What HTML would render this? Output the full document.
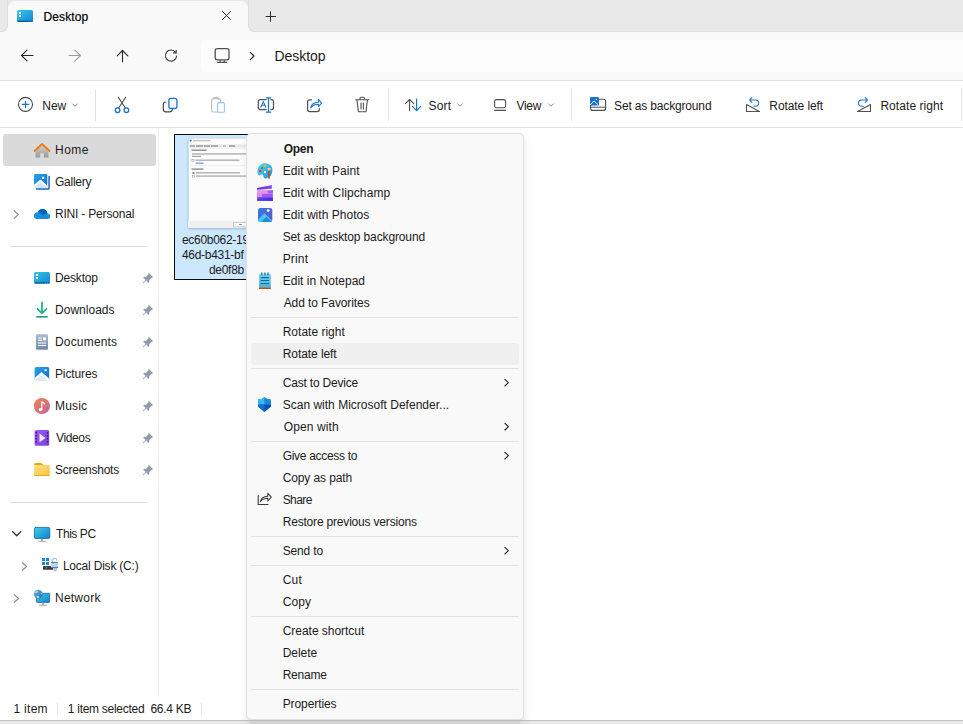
<!DOCTYPE html>
<html><head><meta charset="utf-8">
<style>
*{box-sizing:border-box}
html,body{margin:0;padding:0}
body{width:963px;height:724px;overflow:hidden;position:relative;background:#fff;font-family:"Liberation Sans",sans-serif;color:#1b1b1b}
.a{position:absolute}
.t{position:absolute;white-space:nowrap;font-size:13px;letter-spacing:-0.3px;line-height:16px}
svg{position:absolute;overflow:visible}
.nav .t{left:55px}
.m .t{left:283px}
.sep{position:absolute;height:1px;background:#e3e3e3}
</style></head><body>

<!-- tab strip -->
<div class="a" style="left:0;top:0;width:963px;height:81px;background:#f9f9f9"></div>
<div class="a" style="left:0;top:0;width:963px;height:32px;background:#e8e8e8"></div>
<div class="a" style="left:0;top:24px;width:963px;height:8px;background:#f9f9f9"></div>
<div class="a" style="left:0;top:0;width:8px;height:32px;background:#e8e8e8;border-bottom:1px solid #dcdcdc;border-right:1px solid #dcdcdc;border-bottom-right-radius:6px"></div>
<div class="a" style="left:248px;top:0;width:715px;height:32px;background:#e8e8e8;border-bottom:1px solid #dcdcdc;border-left:1px solid #dcdcdc;border-bottom-left-radius:6px"></div>
<div class="a" style="left:8px;top:1px;width:240px;height:40px;background:#f9f9f9;border-radius:7px 7px 0 0"></div>

<!-- address box -->
<div class="a" style="left:201px;top:40px;width:762px;height:32px;background:#fdfdfd;border-radius:5px 0 0 5px"></div>

<div class="a" style="left:0;top:80px;width:963px;height:1px;background:#e3e3e3"></div>
<!-- toolbar -->
<div class="a" style="left:0;top:81px;width:963px;height:46px;background:#fff"></div>
<div class="a" style="left:0;top:127px;width:963px;height:1px;background:#e3e3e3"></div>
<div class="a" style="left:95px;top:89px;width:1px;height:32px;background:#e3e3e3"></div>
<div class="a" style="left:388px;top:89px;width:1px;height:32px;background:#e3e3e3"></div>
<div class="a" style="left:571px;top:89px;width:1px;height:32px;background:#e3e3e3"></div>
<div class="a" style="left:961px;top:89px;width:1px;height:32px;background:#e3e3e3"></div>


<!-- nav pane -->
<div class="a" style="left:158px;top:128px;width:1px;height:569px;background:#efefef"></div>
<div class="a" style="left:3px;top:134px;width:153px;height:32px;background:#dadada;border-radius:3px"></div>
<div class="nav">
<div class="a" style="left:10px;top:246px;width:138px;height:1px;background:#dcdcdc"></div>
<div class="a" style="left:10px;top:502px;width:138px;height:1px;background:#dcdcdc"></div>
</div>

<!-- status bar -->
<div class="a" style="left:57px;top:703px;width:1px;height:11px;background:#e3e3e3"></div>
<div class="a" style="left:201px;top:703px;width:1px;height:11px;background:#e3e3e3"></div>
<div class="a" style="left:0;top:720px;width:963px;height:1px;background:#c2c2c2"></div>
<div class="a" style="left:0;top:721px;width:963px;height:3px;background:#e8e8e8"></div>
<div class="a" style="left:250px;top:721px;width:270px;height:3px;background:#dadada;box-shadow:0 0 8px 3px #dedede"></div>
<div class="a" style="left:0;top:720px;width:963px;height:1px;background:#c2c2c2"></div>

<!-- file item -->
<div class="a" style="left:174px;top:134px;width:90px;height:146px;background:#cce8ff;border:1px solid #0a0a0a"></div>
<div class="a" style="left:188px;top:138px;width:70px;height:90px;background:#fff;border:1px solid #c8c8c8;box-shadow:0 1px 2px rgba(0,0,0,.22)"></div>
<div class="t" style="left:182px;top:232px;font-size:12px">ec60b062-19cf-</div>
<div class="t" style="left:182px;top:247px;font-size:12px">46d-b431-bf</div>
<div class="t" style="left:209px;top:262px;font-size:12px">de0f8b</div>


<svg style="left:188px;top:138px" width="60" height="90" viewBox="0 0 60 90">
<rect x="0" y="0" width="60" height="90" fill="#fcfcfc"/><rect x="0" y="0" width="1" height="90" fill="#d9d9d9"/><rect x="0" y="0" width="60" height="0.8" fill="#dedede"/>
<circle cx="2.6" cy="2.6" r="1.1" fill="#2a7fe0"/>
<rect x="5" y="2.1" width="18" height="1.1" fill="#b8b8b8"/>
<rect x="0" y="6.4" width="60" height="3.2" fill="#e9e9e9"/>
<rect x="34" y="6.4" width="5" height="3.2" fill="#f6f6f6"/>
<rect x="2" y="7.4" width="5" height="1.2" fill="#8a8a8a"/><rect x="8" y="7.4" width="7" height="1.2" fill="#8a8a8a"/><rect x="16" y="7.4" width="6" height="1.2" fill="#8a8a8a"/><rect x="23" y="7.4" width="7" height="1.2" fill="#8a8a8a"/><rect x="35" y="7.4" width="3" height="1.2" fill="#a0a0a0"/><rect x="41" y="7.4" width="6" height="1.2" fill="#8a8a8a"/>
<rect x="3" y="10.2" width="57" height="17.2" fill="none" stroke="#e6e6e6" stroke-width="0.6"/>
<rect x="3.5" y="11.6" width="15" height="1.2" fill="#7a7a7a"/>
<rect x="4" y="15.4" width="56" height="1.1" fill="#9c9c9c"/>
<rect x="4" y="17.8" width="9" height="1.1" fill="#9c9c9c"/>
<rect x="4" y="21.3" width="2" height="2" fill="none" stroke="#999" stroke-width="0.5"/>
<rect x="7.5" y="21.6" width="44" height="1.1" fill="#9c9c9c"/>
<rect x="7.5" y="24.6" width="8" height="1.1" fill="#5b94e6"/>
<rect x="3.5" y="30.5" width="12" height="1.2" fill="#7a7a7a"/>
<rect x="4.5" y="34" width="2" height="2" fill="#888"/>
<rect x="8" y="34.3" width="44" height="1.1" fill="#9c9c9c"/>
<rect x="4.5" y="37.2" width="2" height="2" fill="none" stroke="#999" stroke-width="0.5"/>
<rect x="8" y="37.5" width="52" height="1.1" fill="#9c9c9c"/>
<rect x="0" y="83" width="60" height="7" fill="#f0f0f0"/>
<rect x="45.4" y="84.4" width="15" height="4.4" fill="#fbfbfb" stroke="#9fb6d0" stroke-width="0.6"/>
<rect x="51" y="86.2" width="3" height="0.8" fill="#777"/>
</svg>

<!-- context menu -->
<div class="a" style="left:246px;top:133px;width:278px;height:587px;background:#f9f9f9;border:1px solid #dfdfdf;border-radius:5px;box-shadow:1px 2px 9px rgba(0,0,0,.08)"></div>
<div class="a" style="left:251px;top:343px;width:268px;height:22px;background:#f0f0f0;border-radius:4px"></div>
<div class="m">
<div class="sep" style="left:251px;top:317px;width:268px"></div>
<div class="sep" style="left:251px;top:368px;width:268px"></div>
<div class="sep" style="left:251px;top:441px;width:268px"></div>
<div class="sep" style="left:251px;top:536px;width:268px"></div>
<div class="sep" style="left:251px;top:565px;width:268px"></div>
<div class="sep" style="left:251px;top:616px;width:268px"></div>
<div class="sep" style="left:251px;top:689px;width:268px"></div>
</div>

<div class="t tab" style="left:43.5px;top:9px;font-size:12px;letter-spacing:0.117px;-webkit-text-stroke:0.2px #000;color:#000">Desktop</div>
<div class="t addr" style="left:274.5px;top:48px;font-size:14px;letter-spacing:-0.033px">Desktop</div>
<div class="t tb" style="left:42.3px;top:98px;font-size:12px;letter-spacing:-0.025px">New</div>
<div class="t tb" style="left:428.5px;top:98px;font-size:12px;letter-spacing:0.167px">Sort</div>
<div class="t tb" style="left:516.5px;top:98px;font-size:12px;letter-spacing:-0.333px">View</div>
<div class="t tb" style="left:614.1px;top:98px;font-size:12px;letter-spacing:-0.163px">Set as background</div>
<div class="t tb" style="left:769.3px;top:98px;font-size:12px;letter-spacing:-0.08px">Rotate left</div>
<div class="t tb" style="left:880.4px;top:98px;font-size:12px;letter-spacing:0.064px">Rotate right</div>
<div class="t nav" style="left:55.0px;top:142px;font-size:12px;letter-spacing:0.5px">Home</div>
<div class="t nav" style="left:55.0px;top:174px;font-size:12px;letter-spacing:-0.25px">Gallery</div>
<div class="t nav" style="left:55.0px;top:206px;font-size:12px;letter-spacing:-0.193px">RINI - Personal</div>
<div class="t nav" style="left:55.0px;top:270px;font-size:12px;letter-spacing:-0.167px">Desktop</div>
<div class="t nav" style="left:55.0px;top:302px;font-size:12px;letter-spacing:0.025px">Downloads</div>
<div class="t nav" style="left:55.0px;top:334px;font-size:12px;letter-spacing:0.175px">Documents</div>
<div class="t nav" style="left:55.0px;top:366px;font-size:12px;letter-spacing:-0.129px">Pictures</div>
<div class="t nav" style="left:55.0px;top:398px;font-size:12px;letter-spacing:0.175px">Music</div>
<div class="t nav" style="left:56.0px;top:430px;font-size:12px;letter-spacing:-0.36px">Videos</div>
<div class="t nav" style="left:55.0px;top:462px;font-size:12px;letter-spacing:-0.25px">Screenshots</div>
<div class="t nav" style="left:56.0px;top:526px;font-size:12px;letter-spacing:-0.433px">This PC</div>
<div class="t nav" style="left:62.9px;top:558px;font-size:12px;letter-spacing:-0.207px">Local Disk (C:)</div>
<div class="t nav" style="left:55.0px;top:590px;font-size:12px;letter-spacing:0.233px">Network</div>
<div class="t menu" style="left:283.7px;top:141px;font-size:12px;letter-spacing:-0.3px;font-weight:bold">Open</div>
<div class="t menu" style="left:282.7px;top:163px;font-size:12px;letter-spacing:0.057px">Edit with Paint</div>
<div class="t menu" style="left:282.7px;top:185px;font-size:12px;letter-spacing:0.122px">Edit with Clipchamp</div>
<div class="t menu" style="left:282.7px;top:207px;font-size:12px;letter-spacing:0.04px">Edit with Photos</div>
<div class="t menu" style="left:282.7px;top:229px;font-size:12px;letter-spacing:-0.125px">Set as desktop background</div>
<div class="t menu" style="left:282.7px;top:251px;font-size:12px;letter-spacing:0.15px">Print</div>
<div class="t menu" style="left:282.7px;top:273px;font-size:12px;letter-spacing:0.021px">Edit in Notepad</div>
<div class="t menu" style="left:283.7px;top:295px;font-size:12px;letter-spacing:-0.093px">Add to Favorites</div>
<div class="t menu" style="left:282.7px;top:324px;font-size:12px;letter-spacing:0.009px">Rotate right</div>
<div class="t menu" style="left:282.7px;top:346px;font-size:12px;letter-spacing:-0.07px">Rotate left</div>
<div class="t menu" style="left:282.7px;top:375px;font-size:12px;letter-spacing:-0.192px">Cast to Device</div>
<div class="t menu" style="left:282.7px;top:397px;font-size:12px;letter-spacing:0.01px">Scan with Microsoft Defender...</div>
<div class="t menu" style="left:283.7px;top:419px;font-size:12px;letter-spacing:0.113px">Open with</div>
<div class="t menu" style="left:282.7px;top:448px;font-size:12px;letter-spacing:-0.308px">Give access to</div>
<div class="t menu" style="left:282.7px;top:470px;font-size:12px;letter-spacing:-0.109px">Copy as path</div>
<div class="t menu" style="left:282.7px;top:492px;font-size:12px;letter-spacing:-0.575px">Share</div>
<div class="t menu" style="left:282.7px;top:514px;font-size:12px;letter-spacing:-0.188px">Restore previous versions</div>
<div class="t menu" style="left:282.7px;top:543px;font-size:12px;letter-spacing:-0.15px">Send to</div>
<div class="t menu" style="left:282.7px;top:572px;font-size:12px;letter-spacing:0.2px">Cut</div>
<div class="t menu" style="left:282.7px;top:594px;font-size:12px;letter-spacing:0.133px">Copy</div>
<div class="t menu" style="left:282.7px;top:623px;font-size:12px;letter-spacing:-0.029px">Create shortcut</div>
<div class="t menu" style="left:282.7px;top:645px;font-size:12px;letter-spacing:-0.04px">Delete</div>
<div class="t menu" style="left:282.7px;top:667px;font-size:12px;letter-spacing:-0.24px">Rename</div>
<div class="t menu" style="left:282.7px;top:696px;font-size:12px;letter-spacing:-0.089px">Properties</div>
<div class="t status" style="left:13.5px;top:701px;font-size:12px;letter-spacing:0.28px">1 item</div>
<div class="t status" style="left:67.8px;top:701px;font-size:12px;letter-spacing:-0.278px">1 item selected&nbsp; 66.4 KB</div>
<!-- ICONS: titlebar/nav -->
<svg style="left:17px;top:10px" width="16" height="12" viewBox="0 0 16 12">
<defs><linearGradient id="gdesk" x1="0" y1="0" x2="1" y2="1"><stop offset="0" stop-color="#30cbe4"/><stop offset="1" stop-color="#1583d6"/></linearGradient></defs>
<rect x="0" y="0" width="16" height="12" rx="1.5" fill="url(#gdesk)"/>
<rect x="0.5" y="10.6" width="11" height="1.4" fill="#0b5a9c"/><rect x="12" y="10.6" width="1.2" height="1.4" fill="#0b5a9c"/><rect x="14.2" y="10.6" width="1.3" height="1.4" fill="#0b5a9c"/>
<rect x="2" y="2" width="2" height="2" fill="#fff"/><rect x="2" y="5" width="2" height="2" fill="#fff"/>
</svg>
<svg style="left:0;top:0" width="963" height="130" viewBox="0 0 963 130" fill="none" stroke-linecap="round" stroke-linejoin="round">
<path d="M222.5 11.5 L230.5 19.5 M230.5 11.5 L222.5 19.5" stroke="#2a2a2a" stroke-width="1"/>
<path d="M266 16.5 H275.5 M270.5 11.8 V21.4" stroke="#2a2a2a" stroke-width="1"/>
<path d="M33 55.5 H21.5 M27 50.2 L21.5 55.5 L27 60.8" stroke="#262626" stroke-width="1.1"/>
<path d="M69 55.5 H80.5 M75 50.2 L80.5 55.5 L75 60.8" stroke="#9d9d9d" stroke-width="1.1"/>
<path d="M122.5 61.8 V50.5 M117.2 55.8 L122.5 50.5 L127.8 55.8" stroke="#262626" stroke-width="1.1"/>
<path d="M175.6 52.4 A5.6 5.6 0 1 0 176.6 56" stroke="#3a3a3a" stroke-width="1.1"/>
<path d="M176.2 50.2 V52.9 H173.5" stroke="#3a3a3a" stroke-width="1.1"/>
<rect x="215.2" y="48.6" width="13.8" height="11.2" rx="2" stroke="#505050" stroke-width="1.3"/>
<path d="M220 60.5 V61.8 M224.2 60.5 V61.8" stroke="#505050" stroke-width="1.2"/>
<path d="M217.5 62.3 H226.7" stroke="#505050" stroke-width="1.2"/>
<path d="M250.3 52.3 L254 56 L250.3 59.7" stroke="#262626" stroke-width="1.1"/>
<!-- toolbar -->
<circle cx="25.5" cy="104.4" r="7" stroke="#474747" stroke-width="1.1"/>
<path d="M22.4 104.4 H28.6 M25.5 101.3 V107.5" stroke="#1773d0" stroke-width="1.3"/>
<path d="M72.5 103.8 L75 106.3 L77.5 103.8 M457.5 103.8 L460 106.3 L462.5 103.8 M548.5 103.8 L551 106.3 L553.5 103.8" stroke="#8c8c8c" stroke-width="1"/>
<path d="M118.3 97.2 L125.2 107.8 M125.7 97.2 L118.8 107.8" stroke="#4a4a4a" stroke-width="1.1"/>
<circle cx="117.6" cy="110.2" r="2.3" stroke="#1773d0" stroke-width="1.3"/>
<circle cx="126.4" cy="110.2" r="2.3" stroke="#1773d0" stroke-width="1.3"/>
<path d="M165.8 102 Q163.3 102 163.3 104.5 V109.3 Q163.3 111.8 165.8 111.8 H169.4 Q171.9 111.8 172.3 109.6" stroke="#474747" stroke-width="1.2"/>
<rect x="168.9" y="98.3" width="8" height="10.2" rx="2" stroke="#1773d0" stroke-width="1.3" fill="#fafafa"/>
<rect x="211.6" y="98.8" width="9" height="13.2" rx="1.5" stroke="#bcbcbc" stroke-width="1.1"/>
<path d="M214 99 V97.6 H218.3 V99" stroke="#bcbcbc" stroke-width="1.1"/>
<rect x="217.6" y="102.6" width="6.8" height="9.6" rx="1.3" stroke="#8fc4f1" stroke-width="1.1" fill="#fff"/>
<path d="M266.2 99.6 H260.3 Q258.3 99.6 258.3 101.6 V107.6 Q258.3 109.6 260.3 109.6 H266.2 M270.8 99.6 H271.5 Q273.5 99.6 273.5 101.6 V107.6 Q273.5 109.6 271.5 109.6 H270.8" stroke="#505050" stroke-width="1.2"/>
<path d="M268.5 97.8 V112.2 M266.3 97.8 H270.7 M266.3 112.2 H270.7" stroke="#1773d0" stroke-width="1.2"/>
<path d="M260.8 107.2 L263.3 101.6 L265.8 107.2 M261.8 105.2 H264.8" stroke="#1773d0" stroke-width="1.1"/>
<path d="M311.5 99.8 H309.6 Q307.6 99.8 307.6 101.8 V109.6 Q307.6 111.6 309.6 111.6 H317.3 Q319.3 111.6 319.3 109.6 V108.6" stroke="#505050" stroke-width="1.2"/>
<path d="M310.6 108 Q311.4 102.6 318.4 102.2 V99.4 L321.6 103.1 L318.4 106.6 V104.2 Q313 104.4 310.6 108 Z" stroke="#1773d0" stroke-width="1.1"/>
<path d="M355.6 99.8 H368.8 M360 99.5 V98.3 Q360 97.3 361 97.3 H363.5 Q364.5 97.3 364.5 98.3 V99.5 M357 100 L358.4 111.8 H366 L367.4 100 M361 103 V109 M363.4 103 V109" stroke="#505050" stroke-width="1.1"/>
<path d="M409.6 110.8 V99.5 M405.4 103.7 L409.6 99.5 L413.8 103.7" stroke="#505050" stroke-width="1.1"/>
<path d="M416.6 99.2 V110.6 M412.4 106.4 L416.6 110.6 L420.8 106.4" stroke="#1773d0" stroke-width="1.2"/>
<rect x="494.6" y="99.6" width="11" height="8.2" rx="1.8" stroke="#505050" stroke-width="1.1"/>
<path d="M494.6 110.4 H505.6" stroke="#505050" stroke-width="1.1"/>
<rect x="590.6" y="99.2" width="15" height="11.2" rx="2" stroke="#505050" stroke-width="1.1"/>
<path d="M590.6 107.2 H605.6" stroke="#505050" stroke-width="1"/>
<rect x="590" y="97" width="9" height="8.6" rx="1.2" fill="#1773d0"/>
<path d="M590.3 104.6 L594 101 L598.2 104.8" stroke="#fff" stroke-width="0.9"/>
<circle cx="596.4" cy="99.4" r="0.7" fill="#fff"/>
<path d="M746.5 104.5 V111.5 H759.5 Z" stroke="#505050" stroke-width="1.1" fill="#fff"/>
<path d="M749.5 100 H755.6 A3.1 3.1 0 0 1 755.6 106.2 H754 M751.9 97.6 L749.5 100 L751.9 102.4" stroke="#1773d0" stroke-width="1.05"/>
<path d="M870.5 104.5 V111.5 H857.5 Z" stroke="#505050" stroke-width="1.1" fill="#fff"/>
<path d="M867.7 100 H861.6 A3.1 3.1 0 0 0 861.6 106.2 H863.2 M865.3 97.6 L867.7 100 L865.3 102.4" stroke="#1773d0" stroke-width="1.05"/>
</svg>

<!-- ICONS: nav pane -->
<svg style="left:0;top:128px" width="160" height="570" viewBox="0 128 160 570" fill="none" stroke-linecap="round" stroke-linejoin="round">
<defs>
<linearGradient id="ghome" x1="0" y1="0" x2="0" y2="1"><stop offset="0" stop-color="#d0d0d0"/><stop offset="1" stop-color="#9a9a9a"/></linearGradient>
<linearGradient id="gblue" x1="0" y1="0" x2="1" y2="1"><stop offset="0" stop-color="#2aa3ec"/><stop offset="1" stop-color="#0f6cc8"/></linearGradient>
<linearGradient id="gdesk2" x1="0" y1="0" x2="1" y2="1"><stop offset="0" stop-color="#30cbe4"/><stop offset="1" stop-color="#1583d6"/></linearGradient>
<linearGradient id="gdoc" x1="0" y1="0" x2="0" y2="1"><stop offset="0" stop-color="#a9bbd2"/><stop offset="1" stop-color="#7189a8"/></linearGradient>
<linearGradient id="gmusic" x1="0" y1="0" x2="1" y2="1"><stop offset="0" stop-color="#f0824a"/><stop offset="1" stop-color="#c0659e"/></linearGradient>
<linearGradient id="gvid" x1="0" y1="0" x2="1" y2="1"><stop offset="0" stop-color="#9a5cf0"/><stop offset="1" stop-color="#7a3fd8"/></linearGradient>
<linearGradient id="gfold" x1="0" y1="0" x2="1" y2="1"><stop offset="0" stop-color="#ffe08a"/><stop offset="1" stop-color="#fcc43c"/></linearGradient>
<linearGradient id="gglobe" x1="0" y1="0" x2="1" y2="1"><stop offset="0" stop-color="#6fc0ee"/><stop offset="1" stop-color="#2569a8"/></linearGradient>
<linearGradient id="gpc" x1="0" y1="0" x2="1" y2="1"><stop offset="0" stop-color="#3fd0ea"/><stop offset="1" stop-color="#137fcc"/></linearGradient>
</defs>
<!-- home -->
<path d="M35.5 150.5 V157.5 H40.2 V153.2 H43.8 V157.5 H48.5 V150.5 L42 145 Z" fill="url(#ghome)"/>
<path d="M34.5 151 L42 144 L49.5 151" stroke="#f07814" stroke-width="1.8"/>
<!-- gallery -->
<path d="M49.1 176.6 V188.3 Q49.1 189.1 48.3 189.1 H36.4" stroke="#1a66c2" stroke-width="1.5" stroke-linecap="round"/>
<rect x="34" y="174" width="13.3" height="13.2" rx="1.2" fill="url(#gblue)"/>
<path d="M34 187.2 V184.8 L40.5 179.6 L47.3 185.6 V187.2 Z" fill="#ffffff"/>
<path d="M34 187.2 V186.4 L40.5 182.2 L46.4 187.2 Z" fill="#d2e8fb"/>
<rect x="42" y="176.8" width="2.2" height="2.2" fill="#fff"/>
<!-- onedrive -->
<path d="M14.2 210.8 L18.4 214.6 L14.2 218.4" stroke="#8a8a8a" stroke-width="1.2"/>
<path d="M36.5 218.9 H48 Q50.2 218.9 50.2 216.5 Q50.2 213.9 47.5 213.6 Q46.5 209 42.5 209 Q39 209 38 212.2 Q34 212.6 34 215.6 Q34 218.9 36.5 218.9 Z" fill="#1490df"/>
<path d="M38 212.2 Q39 209 42.5 209 Q46.5 209 47.5 213.6 Q44.5 213.4 42.8 215.2 Q40.8 212 38 212.2 Z" fill="#0364b8"/>
<!-- separators are divs -->
<!-- desktop -->
<rect x="34" y="272" width="16" height="11.6" rx="1.5" fill="url(#gdesk2)"/>
<rect x="34.5" y="282.2" width="11" height="1.4" fill="#0b5a9c"/><rect x="46" y="282.2" width="1.2" height="1.4" fill="#0b5a9c"/><rect x="48.2" y="282.2" width="1.3" height="1.4" fill="#0b5a9c"/>
<rect x="36" y="274" width="2" height="2" fill="#fff"/><rect x="36" y="277" width="2" height="2" fill="#fff"/>
<!-- downloads -->
<path d="M42 302.5 V313 M37.5 308.8 L42 313.3 L46.5 308.8" stroke="#20b383" stroke-width="1.8"/>
<path d="M36.3 316.8 H47.7" stroke="#1a9e7a" stroke-width="1.6" stroke-linecap="butt"/>
<!-- documents -->
<rect x="36" y="334.2" width="12" height="15.6" rx="1.2" fill="url(#gdoc)"/>
<path d="M38 338 H42 M38 340.4 H42 M38 343 H46 M38 345.5 H46" stroke="#fff" stroke-width="1.1" stroke-linecap="butt"/>
<rect x="43" y="337.4" width="3" height="3" fill="#fff"/>
<!-- pictures -->
<rect x="34.6" y="367" width="14.6" height="14" rx="1.5" fill="url(#gblue)"/>
<path d="M34.6 381 V378 L41.5 372 L49.2 378.5 V381 Z" fill="#fff"/>
<path d="M34.6 381 V380 L41.5 375.5 L48 381 Z" fill="#d5eafc"/>
<rect x="44.6" y="369.2" width="2" height="2" fill="#fff"/>
<!-- music -->
<circle cx="41.9" cy="406" r="8.1" fill="url(#gmusic)"/>
<path d="M41.8 409.6 V401.8 Q43.5 402.3 44.6 403.8" stroke="#fff" stroke-width="1.2"/>
<circle cx="40.4" cy="409.6" r="1.6" fill="#fff"/>
<!-- videos -->
<rect x="34.6" y="430" width="14.6" height="15.7" rx="1.5" fill="url(#gvid)"/>
<path d="M36.2 432 V444 M47.6 432 V444" stroke="#3b1f6b" stroke-width="1.4" stroke-dasharray="1.4 1.6" stroke-linecap="butt"/>
<path d="M39.5 433.5 L45.5 437.9 L39.5 442.3 Z" fill="#f0e8ff"/>
<!-- folder -->
<path d="M34 464.6 Q34 463 35.6 463 H40.6 Q41.6 463 42.3 463.8 L43.4 465.2 H34 Z" fill="#eaa800"/>
<rect x="34" y="465" width="15.8" height="11" rx="1.3" fill="url(#gfold)"/>
<path d="M34.4 475.5 H49.5" stroke="#e9a716" stroke-width="0.9"/>
<!-- pins -->
<path fill="#8f9ba5" transform="translate(0,-0.9)" d="M148.6 273.6 L153.2 278.2 L151.8 278.6 L149.2 281.2 L149.4 283 L148.6 283.8 L146.2 281.4 L143.2 284.4 L142.6 283.8 L145.6 280.8 L143.2 278.4 L144 277.6 L145.8 277.8 L148.4 275.2 Z"/>
<path fill="#8f9ba5" transform="translate(0,31.1)" d="M148.6 273.6 L153.2 278.2 L151.8 278.6 L149.2 281.2 L149.4 283 L148.6 283.8 L146.2 281.4 L143.2 284.4 L142.6 283.8 L145.6 280.8 L143.2 278.4 L144 277.6 L145.8 277.8 L148.4 275.2 Z"/>
<path fill="#8f9ba5" transform="translate(0,63.1)" d="M148.6 273.6 L153.2 278.2 L151.8 278.6 L149.2 281.2 L149.4 283 L148.6 283.8 L146.2 281.4 L143.2 284.4 L142.6 283.8 L145.6 280.8 L143.2 278.4 L144 277.6 L145.8 277.8 L148.4 275.2 Z"/>
<path fill="#8f9ba5" transform="translate(0,95.1)" d="M148.6 273.6 L153.2 278.2 L151.8 278.6 L149.2 281.2 L149.4 283 L148.6 283.8 L146.2 281.4 L143.2 284.4 L142.6 283.8 L145.6 280.8 L143.2 278.4 L144 277.6 L145.8 277.8 L148.4 275.2 Z"/>
<path fill="#8f9ba5" transform="translate(0,127.1)" d="M148.6 273.6 L153.2 278.2 L151.8 278.6 L149.2 281.2 L149.4 283 L148.6 283.8 L146.2 281.4 L143.2 284.4 L142.6 283.8 L145.6 280.8 L143.2 278.4 L144 277.6 L145.8 277.8 L148.4 275.2 Z"/>
<path fill="#8f9ba5" transform="translate(0,159.1)" d="M148.6 273.6 L153.2 278.2 L151.8 278.6 L149.2 281.2 L149.4 283 L148.6 283.8 L146.2 281.4 L143.2 284.4 L142.6 283.8 L145.6 280.8 L143.2 278.4 L144 277.6 L145.8 277.8 L148.4 275.2 Z"/>
<path fill="#8f9ba5" transform="translate(0,191.1)" d="M148.6 273.6 L153.2 278.2 L151.8 278.6 L149.2 281.2 L149.4 283 L148.6 283.8 L146.2 281.4 L143.2 284.4 L142.6 283.8 L145.6 280.8 L143.2 278.4 L144 277.6 L145.8 277.8 L148.4 275.2 Z"/>


<!-- this pc -->
<path d="M12.6 531.6 L16.7 535.7 L20.8 531.6" stroke="#262626" stroke-width="1.3"/>
<rect x="34.4" y="527.4" width="15.4" height="11.1" rx="1.3" fill="url(#gpc)" stroke="#0b6596" stroke-width="0.8"/>
<rect x="41" y="538.8" width="2" height="2.2" fill="#a2abb2"/>
<rect x="38" y="540.8" width="8" height="1" fill="#a2abb2"/>
<!-- local disk -->
<path d="M22.4 562.8 L26.6 566.5 L22.4 570.2" stroke="#8a8a8a" stroke-width="1.2"/>
<rect x="42" y="558" width="3" height="3" fill="#1a86e0"/><rect x="46" y="558" width="3" height="3" fill="#1a86e0"/>
<rect x="42" y="562" width="3" height="3" fill="#1a86e0"/><rect x="46" y="562" width="3" height="3" fill="#1a86e0"/>
<rect x="43" y="566" width="10" height="3.8" rx="0.5" fill="#3a3a3a"/>
<circle cx="46.4" cy="567.7" r="0.8" fill="#3ee04a"/>
<path d="M52.2 561.6 Q52.2 558.3 54.6 558.3 Q56.6 558.3 56.8 560" stroke="#b9c3ca" stroke-width="1.3"/>
<path d="M53 568 Q53 571.6 55.2 571.6 Q57.2 571.6 57.2 568" fill="#b9c3ca"/>
<rect x="51" y="562" width="7" height="6" fill="#c9d1d7"/>
<rect x="51" y="561.9" width="7" height="1.1" rx="0.5" fill="#2b86d8"/>
<rect x="51" y="567" width="7" height="1.1" rx="0.5" fill="#2b86d8"/>
<!-- network -->
<path d="M14.2 594.6 L18.6 598.5 L14.2 602.4" stroke="#8a8a8a" stroke-width="1.2"/>
<rect x="36.4" y="593.3" width="13.3" height="9.2" rx="1" fill="url(#gpc)" stroke="#0e5c9e" stroke-width="0.7"/>
<rect x="42" y="602.6" width="2.2" height="2.4" fill="#a2abb2"/>
<rect x="39" y="604.8" width="8" height="1" fill="#a2abb2"/>
<circle cx="38.3" cy="594.2" r="4.4" fill="url(#gglobe)"/>
<path d="M35.4 592 Q36.8 590.6 38 591.6 Q37.2 593 35.6 593.2 Z M36.6 596.2 Q38.2 595.6 39.4 597 Q38.6 598.2 37.2 597.8 Z M40.8 592.6 Q42 593 42.2 594.6 Q41.2 594.4 40.8 592.6 Z" fill="#d8eefa"/>
</svg>

<!-- ICONS: menu -->
<svg style="left:240px;top:150px" width="290" height="420" viewBox="240 150 290 420" fill="none" stroke-linecap="round" stroke-linejoin="round">
<defs>
<linearGradient id="gpaint" x1="0" y1="0" x2="1" y2="1"><stop offset="0" stop-color="#5fd6f5"/><stop offset="1" stop-color="#1a8fe0"/></linearGradient>
<linearGradient id="gclap" x1="0" y1="0" x2="1" y2="0"><stop offset="0" stop-color="#4f2fd6"/><stop offset="1" stop-color="#9c50e2"/></linearGradient><linearGradient id="gcl1" x1="0" y1="0" x2="1" y2="0"><stop offset="0" stop-color="#eb96f2"/><stop offset="0.65" stop-color="#df8cf0"/><stop offset="0.7" stop-color="#b066ec"/><stop offset="1" stop-color="#a45aea"/></linearGradient><linearGradient id="gcl3" x1="0" y1="0" x2="1" y2="1"><stop offset="0" stop-color="#6a4ae8"/><stop offset="1" stop-color="#3a22ea"/></linearGradient>
<linearGradient id="gphot" x1="0" y1="0" x2="1" y2="1"><stop offset="0" stop-color="#2d7fe0"/><stop offset="1" stop-color="#6b4cc9"/></linearGradient>
<linearGradient id="gnote" x1="0" y1="0" x2="0" y2="1"><stop offset="0" stop-color="#7fd3f2"/><stop offset="1" stop-color="#46b0dc"/></linearGradient>
<linearGradient id="gshield" x1="0" y1="0" x2="1" y2="1"><stop offset="0" stop-color="#30a8f0"/><stop offset="1" stop-color="#0b5cb8"/></linearGradient>
</defs>
<!-- paint palette -->
<path d="M264.6 163.3 C268.5 163.3 272.4 165.5 272.4 169.3 C272.4 172.5 271.5 175 270.5 176 L266 178.6 C264.5 178.8 263.5 177.5 263.3 176 C263.2 174.8 262.8 174.3 261.5 174.6 C260 175.5 258.5 175.8 257.8 174.6 C257 173 257.2 170 258.3 167.6 C259.5 165 262 163.3 264.6 163.3 Z" fill="url(#gpaint)"/>
<rect x="259.2" y="170" width="2" height="2" fill="#e8321e"/>
<rect x="260.9" y="167.1" width="2" height="2" fill="#2f9e2a"/>
<rect x="264" y="164.9" width="2" height="2" fill="#f5b800"/>
<rect x="264" y="171.1" width="2" height="2" fill="#ffffff"/>
<path d="M269 170.2 V178.6" stroke="#a8581c" stroke-width="1.8" stroke-linecap="butt"/>
<path d="M267.2 168 H271 L270.2 170.4 H268 Z" fill="#efcd92"/>
<!-- clipchamp -->
<path d="M257.1 188 L271.9 185 V188.8 L257.1 189.8 Z" fill="url(#gclap)"/>
<rect x="257.1" y="190.1" width="15.8" height="3.5" fill="url(#gcl1)"/>
<rect x="257.1" y="193.6" width="15.8" height="3.5" fill="#a457ea"/>
<rect x="257.1" y="193.6" width="5" height="3.5" fill="#e08cf0"/>
<rect x="257.1" y="197.1" width="15.8" height="3.8" fill="url(#gcl3)"/>
<!-- photos -->
<rect x="258" y="207.9" width="14.3" height="14.2" rx="2.4" fill="url(#gphot)"/>
<path d="M258.2 219.5 L264.5 213.2 L272.2 220.8 V220 Q272.2 222 270.3 222 H260 Q258.2 222 258.2 220 Z" fill="#48c8f0"/>
<path d="M261 222 L266.5 216.8 L271.8 222 Z" fill="#1d8fd6"/>
<circle cx="268.2" cy="210.6" r="1.45" fill="#fff"/>
<!-- notepad -->
<rect x="259" y="273.8" width="11.8" height="14" fill="url(#gnote)"/>
<rect x="259" y="287.5" width="11.8" height="1.5" fill="#b0581a"/>
<path d="M261.2 277.6 H268.6 M261.2 280.5 H268.6 M261.2 283.5 H268.6" stroke="#0d6e96" stroke-width="1.1"/>
<path d="M261.8 272.8 V274.8 M264.9 272.8 V274.8 M268 272.8 V274.8" stroke="#0d6e96" stroke-width="1.2"/>
</svg>
<svg style="left:240px;top:370px" width="290" height="200" viewBox="240 370 290 200" fill="none" stroke-linecap="round" stroke-linejoin="round">
<path d="M258 399.2 L261.4 399 L264.4 397 L267.5 399 L270.9 399.2 V406.4 L264.4 411.9 L258 406.4 Z" fill="#1a86dc"/>
<path d="M258 399.2 L261.4 399 L264.4 397 V404.6 H258 Z" fill="#38b8ee"/>
<path d="M258 404.6 H264.4 V411.9 L258 406.4 Z" fill="#0e6fd0"/>
<path d="M264.4 404.6 H270.9 V406.4 L264.4 411.9 Z" fill="#0b52aa"/>
<path d="M258.2 495.5 V504.5 H268" stroke="#3a3a3a" stroke-width="1.1"/>
<path d="M260.3 501.8 Q261.5 496.4 267.8 496.2 V493.3 L271.3 497.2 L267.8 501 V498.3 Q263 498.3 260.3 501.8 Z" stroke="#3a3a3a" stroke-width="1.05"/>
<path d="M504.9 379.4 L508.4 382.7 L504.9 386 M504.9 452.4 L508.4 455.7 L504.9 459 M504.9 423.4 L508.4 426.7 L504.9 430 M504.9 547.4 L508.4 550.7 L504.9 554" stroke="#222" stroke-width="1.1"/>
</svg>

</body></html>
